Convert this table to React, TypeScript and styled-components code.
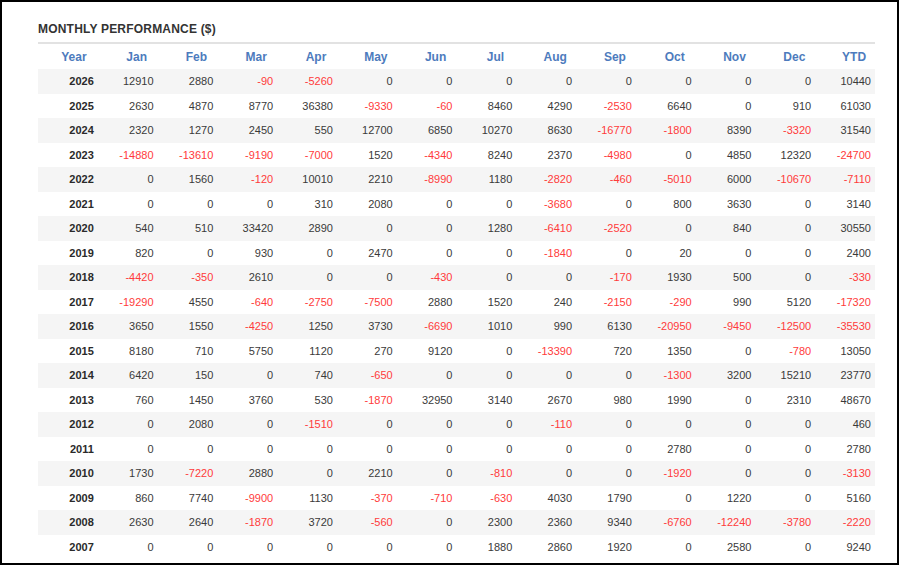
import React from "react";
import styled, { createGlobalStyle } from "styled-components";

const GlobalStyle = createGlobalStyle`
  html, body { margin: 0; padding: 0; background: #fff; }
  body { font-family: "Liberation Sans", Arial, sans-serif; }
`;

const Frame = styled.div`
  box-sizing: border-box;
  width: 899px;
  height: 565px;
  border: 2px solid #000;
  padding: 19px 22px 0 36px;
  background: #fff;
`;

const Title = styled.h2`
  margin: 0;
  font-size: 12px;
  line-height: 16px;
  font-weight: bold;
  letter-spacing: 0.2px;
  color: #333;
  padding-bottom: 5px;
  border-bottom: 2px solid #e2e2e2;
`;

const Grid = styled.div`
  width: 837px;
`;

const Row = styled.div<{ $striped?: boolean; $head?: boolean }>`
  display: grid;
  grid-template-columns: repeat(14, 1fr);
  align-items: center;
  height: ${(p) => (p.$head ? "25px" : "24.5px")};
  background: ${(p) => (p.$striped ? "#f5f5f5" : "#fff")};
`;

const HeadCell = styled.div<{ $first?: boolean }>`
  font-size: 12px;
  font-weight: bold;
  color: #4d7bbd;
  text-align: center;
  padding: ${(p) => (p.$first ? "0 2px 0 14px" : "0 2px 0 20px")};
`;

const Cell = styled.div<{ $neg?: boolean; $year?: boolean }>`
  font-size: 11px;
  text-align: right;
  padding-right: 4px;
  font-weight: ${(p) => (p.$year ? "bold" : "normal")};
  color: ${(p) => (p.$neg ? "#ff3b3b" : p.$year ? "#2a2a2a" : "#3a3a3a")};
`;

const headers = ["Year", "Jan", "Feb", "Mar", "Apr", "May", "Jun", "Jul", "Aug", "Sep", "Oct", "Nov", "Dec", "YTD"];

const data: [number, number[]][] = [
  [2026, [12910, 2880, -90, -5260, 0, 0, 0, 0, 0, 0, 0, 0, 10440]],
  [2025, [2630, 4870, 8770, 36380, -9330, -60, 8460, 4290, -2530, 6640, 0, 910, 61030]],
  [2024, [2320, 1270, 2450, 550, 12700, 6850, 10270, 8630, -16770, -1800, 8390, -3320, 31540]],
  [2023, [-14880, -13610, -9190, -7000, 1520, -4340, 8240, 2370, -4980, 0, 4850, 12320, -24700]],
  [2022, [0, 1560, -120, 10010, 2210, -8990, 1180, -2820, -460, -5010, 6000, -10670, -7110]],
  [2021, [0, 0, 0, 310, 2080, 0, 0, -3680, 0, 800, 3630, 0, 3140]],
  [2020, [540, 510, 33420, 2890, 0, 0, 1280, -6410, -2520, 0, 840, 0, 30550]],
  [2019, [820, 0, 930, 0, 2470, 0, 0, -1840, 0, 20, 0, 0, 2400]],
  [2018, [-4420, -350, 2610, 0, 0, -430, 0, 0, -170, 1930, 500, 0, -330]],
  [2017, [-19290, 4550, -640, -2750, -7500, 2880, 1520, 240, -2150, -290, 990, 5120, -17320]],
  [2016, [3650, 1550, -4250, 1250, 3730, -6690, 1010, 990, 6130, -20950, -9450, -12500, -35530]],
  [2015, [8180, 710, 5750, 1120, 270, 9120, 0, -13390, 720, 1350, 0, -780, 13050]],
  [2014, [6420, 150, 0, 740, -650, 0, 0, 0, 0, -1300, 3200, 15210, 23770]],
  [2013, [760, 1450, 3760, 530, -1870, 32950, 3140, 2670, 980, 1990, 0, 2310, 48670]],
  [2012, [0, 2080, 0, -1510, 0, 0, 0, -110, 0, 0, 0, 0, 460]],
  [2011, [0, 0, 0, 0, 0, 0, 0, 0, 0, 2780, 0, 0, 2780]],
  [2010, [1730, -7220, 2880, 0, 2210, 0, -810, 0, 0, -1920, 0, 0, -3130]],
  [2009, [860, 7740, -9900, 1130, -370, -710, -630, 4030, 1790, 0, 1220, 0, 5160]],
  [2008, [2630, 2640, -1870, 3720, -560, 0, 2300, 2360, 9340, -6760, -12240, -3780, -2220]],
  [2007, [0, 0, 0, 0, 0, 0, 1880, 2860, 1920, 0, 2580, 0, 9240]],
];

export default function App() {
  return (
    <>
      <GlobalStyle />
      <Frame>
        <Grid>
          <Title>MONTHLY PERFORMANCE ($)</Title>
          <Row $head>
            {headers.map((h, i) => (
              <HeadCell key={h} $first={i === 0}>
                {h}
              </HeadCell>
            ))}
          </Row>
          {data.map(([year, vals], i) => (
            <Row key={year} $striped={i % 2 === 0}>
              <Cell $year>{year}</Cell>
              {vals.map((v, j) => (
                <Cell key={j} $neg={v < 0}>
                  {v}
                </Cell>
              ))}
            </Row>
          ))}
        </Grid>
      </Frame>
    </>
  );
}
